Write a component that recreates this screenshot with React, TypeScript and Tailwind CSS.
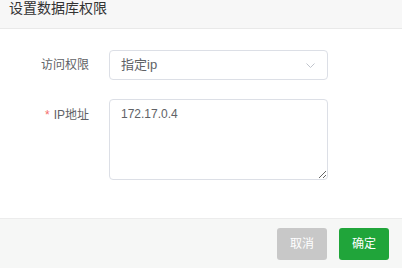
import React from "react";

export default function App() {
  const font = { fontFamily: '"Liberation Sans", "Noto Sans CJK SC", sans-serif' };
  return (
    <div className="w-[402px] h-[268px] bg-white flex flex-col overflow-hidden text-[#333]" style={font}>
      <div className="h-[29px] shrink-0 bg-[#f7f7f7] border-b border-[#e9e9e9] pl-[9px] pt-[1px] text-[14px] leading-[14px]">
        设置数据库权限
      </div>
      <div className="flex-1 flex flex-col pt-[21px] gap-[19px]">
        <div className="flex items-center">
          <div className="w-[89px] text-right text-[12px] text-[#606266]">访问权限</div>
          <div className="ml-[20px] w-[219px] h-[30px] border border-[#dcdfe6] rounded-[4px] flex items-center justify-between pl-[11px] pr-[12px]">
            <span className="text-[13px] text-[#606266]">指定ip</span>
            <svg width="9" height="5" viewBox="0 0 9 5" fill="none">
              <path d="M0.5 0.5 L4.5 4.5 L8.5 0.5" stroke="#c0c4cc" strokeWidth="1" />
            </svg>
          </div>
        </div>
        <div className="flex items-start">
          <div className="w-[89px] text-right text-[12px] text-[#606266] pt-[7px]">
            <span className="text-[#f56c6c] mr-[4px]">*</span>IP地址
          </div>
          <textarea
            className="ml-[20px] w-[219px] h-[81px] border border-[#dcdfe6] rounded-[4px] px-[11px] pt-[5px] text-[12px] leading-[18px] text-[#606266] outline-none"
            style={font}
            defaultValue="172.17.0.4"
          />
        </div>
      </div>
      <div className="h-[50px] shrink-0 bg-[#f6f7f6] border-t border-[#ececec] flex items-center justify-end gap-[12px] pr-[13px]">
        <button className="w-[50px] h-[32px] rounded-[3px] bg-[#c8c8c8] text-white text-[12px]" style={font}>取消</button>
        <button className="w-[50px] h-[32px] rounded-[3px] bg-[#20a53a] text-white text-[12px]" style={font}>确定</button>
      </div>
    </div>
  );
}
